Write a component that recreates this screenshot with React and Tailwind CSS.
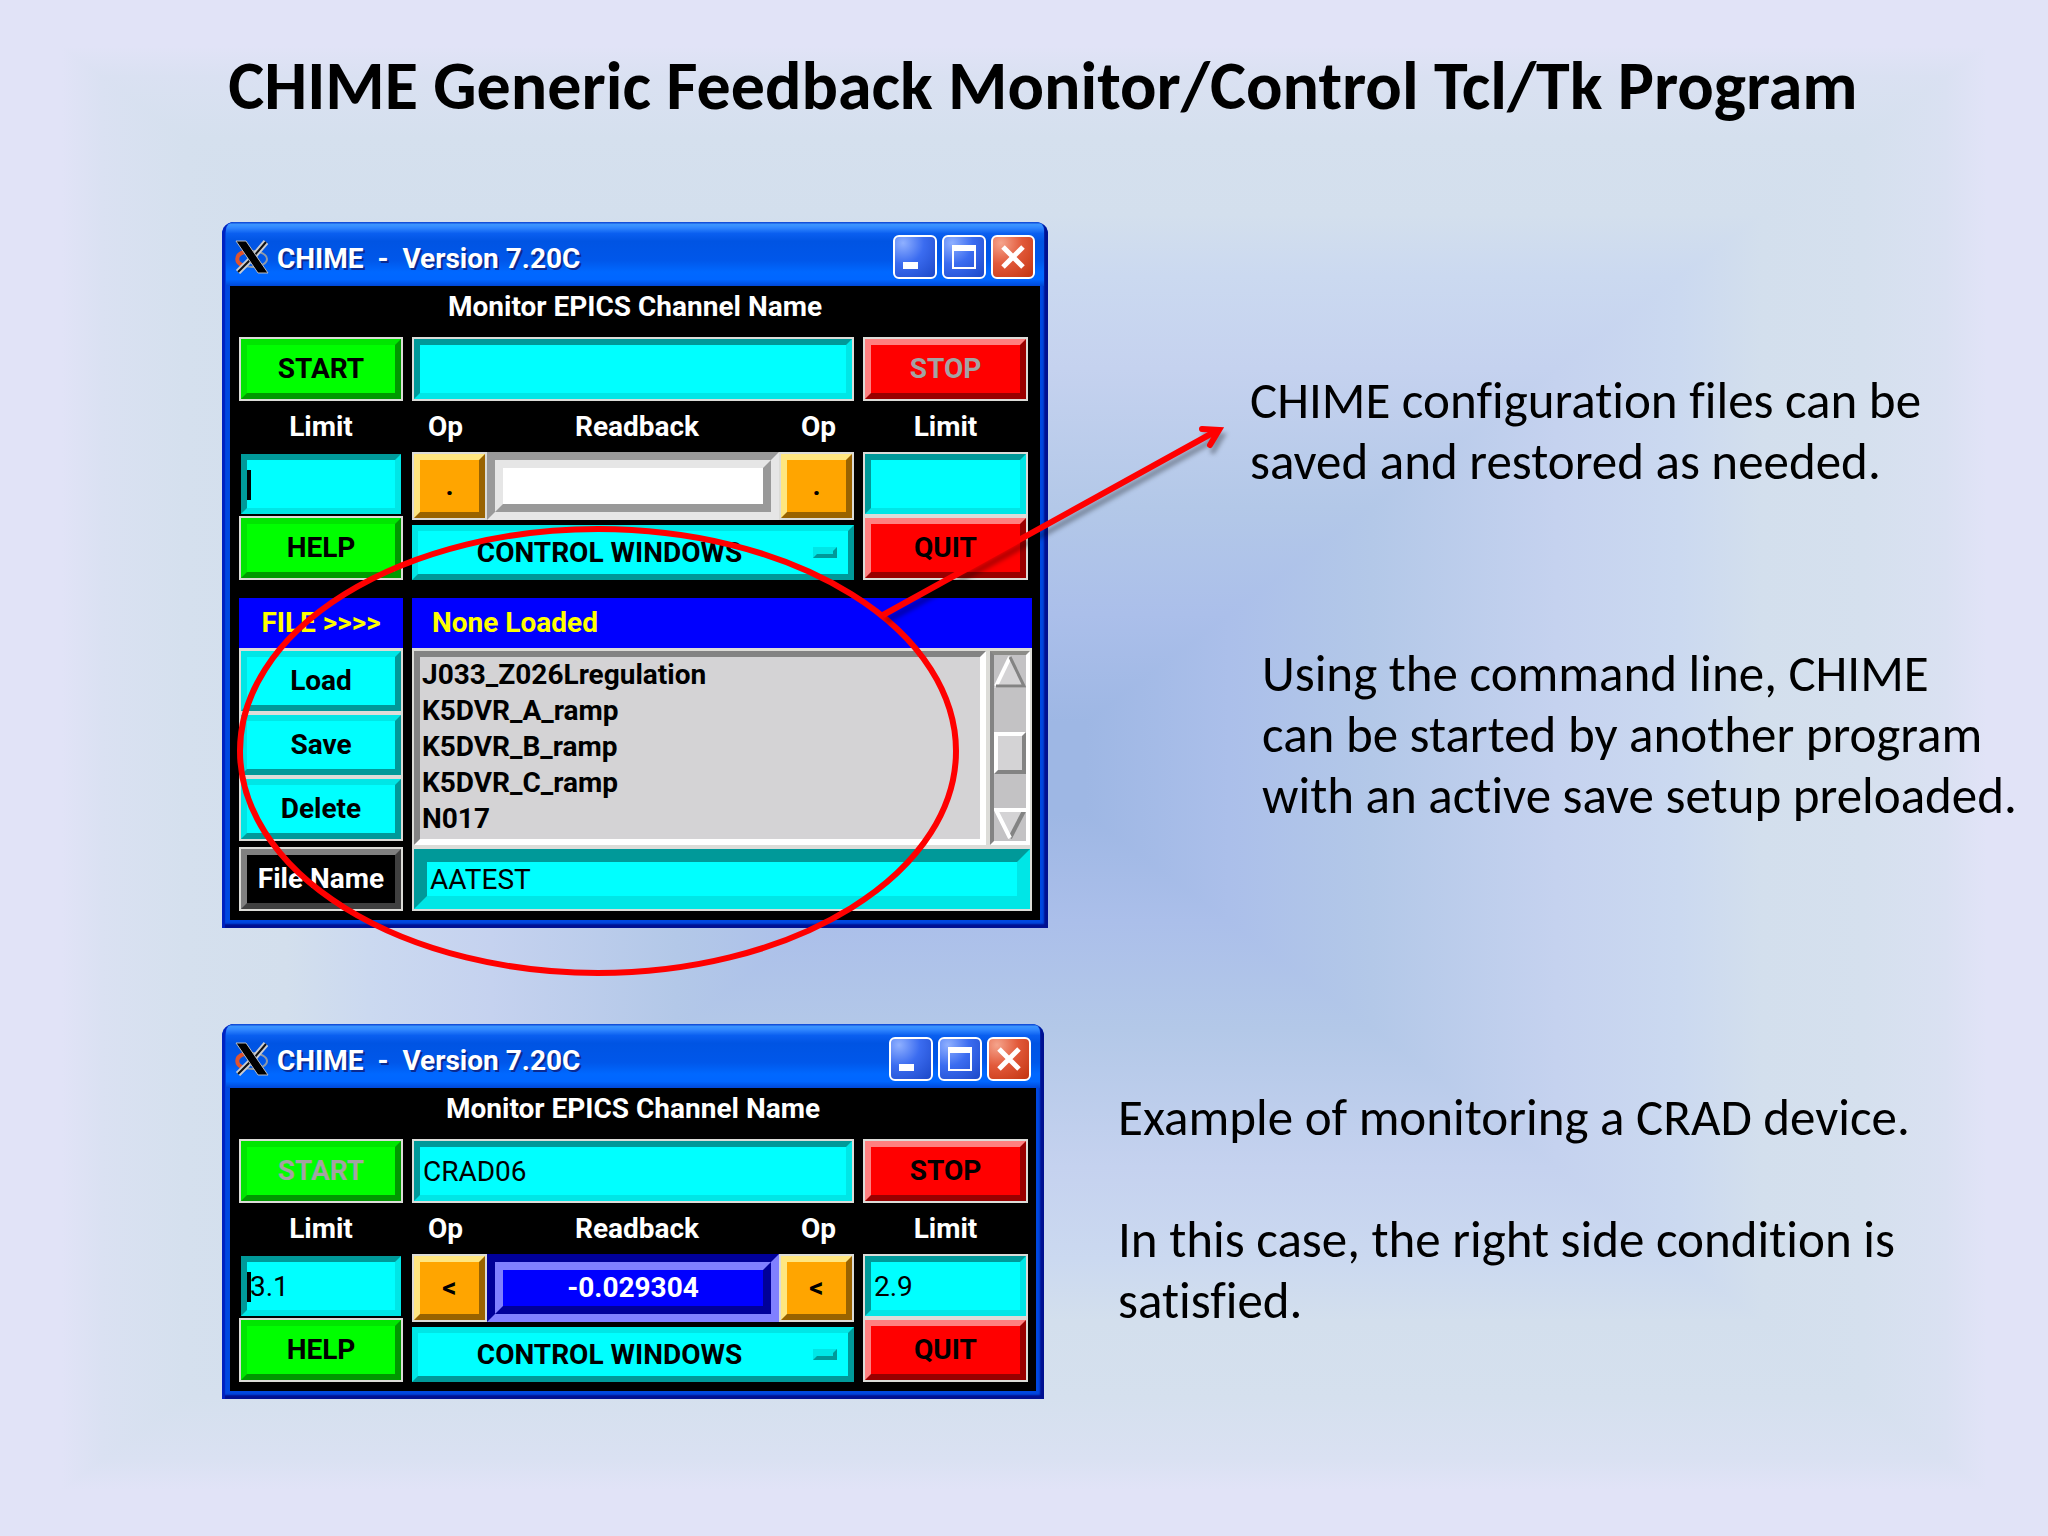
import clsx from "clsx"

// Tk relief colours: light edge on top/left for raised, dark edge for sunken
const tones = {
  green: "bg-[#00ff00] border-t-[#00e600] border-l-[#00e600] border-b-[#009900] border-r-[#009900] text-black",
  red: "bg-[#ff0000] border-t-[#ff8080] border-l-[#ff8080] border-b-[#990000] border-r-[#990000] text-black",
  cyan: "bg-[#00ffff] border-t-[#00e6e6] border-l-[#00e6e6] border-b-[#009999] border-r-[#009999] text-black",
  orange: "bg-[#ffa500] border-t-[#ffe680] border-l-[#ffe680] border-b-[#996300] border-r-[#996300] text-black",
  black: "bg-black border-t-[#808080] border-l-[#808080] border-b-[#404040] border-r-[#404040] text-white",
}

const sunkenCyan = "bg-[#00ffff] border-t-[#009999] border-l-[#009999] border-b-[#00e6e6] border-r-[#00e6e6] text-black"

const readbacks = {
  idle: {
    outer: "border-t-[#999999] border-l-[#999999] border-b-[#e6e6e6] border-r-[#e6e6e6]",
    inner: "bg-white border-t-[#e6e6e6] border-l-[#e6e6e6] border-b-[#999999] border-r-[#999999]",
  },
  active: {
    outer: "border-t-[#000099] border-l-[#000099] border-b-[#8080ff] border-r-[#8080ff]",
    inner: "bg-[#0000ff] border-t-[#8080ff] border-l-[#8080ff] border-b-[#000099] border-r-[#000099]",
  },
}

const files = ["J033_Z026Lregulation", "K5DVR_A_ramp", "K5DVR_B_ramp", "K5DVR_C_ramp", "N017"]

const Frame = ({ className, children }) => (
  <div className={clsx("flex border-2 border-[#dcdcd8]", className)}>{children}</div>
)

const TkButton = ({ tone, className, children, ...props }) => (
  <button
    type="button"
    className={clsx("w-full border-6 leading-none font-bold disabled:text-[#a3a3a3]", tones[tone], className)}
    {...props}
  >
    {children}
  </button>
)

const Entry = ({ className, ...props }) => (
  <input
    type="text"
    className={clsx("w-full min-w-0 px-[3px] font-normal outline-none", sunkenCyan, className || "border-6")}
    {...props}
  />
)

const XLogo = () => (
  <svg viewBox="0 0 34 34" className="h-[34px] w-[34px]" aria-hidden="true">
    <ellipse cx="17" cy="19" rx="15" ry="8" fill="none" stroke="#8f9aa8" strokeWidth="2" />
    <path d="M9 12C0 15 0 23 9 26" fill="none" stroke="#e0532f" strokeWidth="4" />
    <path d="M31 2L19 16M15 20L3 32" stroke="#c9ccd2" strokeWidth="6" />
    <path d="M31 2L19 16M15 20L3 32" stroke="#111" strokeWidth="2" />
    <path d="M1 1h10l22 32H23z" fill="#000" stroke="#b9bcc2" strokeWidth="1" />
  </svg>
)

const captionButton =
  "flex h-11 w-11 items-center justify-center rounded-md border-2 border-white"

const TitleBar = () => (
  <div className="flex h-16 items-center bg-[linear-gradient(#0a3fd0_0%,#3c96ff_4%,#2f86ff_9%,#0a5ff0_18%,#0054e3_30%,#0057ea_60%,#0068ff_78%,#0066ff_90%,#0048d8_100%)] px-[9px] pt-1.5">
    <XLogo />
    <h2 className="flex-1 pt-1 pl-2 font-bold whitespace-pre text-white [text-shadow:2px_2px_0_#0a2a90]">{"CHIME  -  Version 7.20C"}</h2>
    <div className="flex gap-[5px]">
      <button type="button" aria-label="Minimize" className={clsx(captionButton, "bg-[radial-gradient(circle_at_20%_15%,#8fb0ff,#3b6cf0_45%,#1c48c8)]")}>
        <svg viewBox="0 0 40 40" className="h-10 w-10"><path d="M8 25h15v7H8z" fill="#fff" /></svg>
      </button>
      <button type="button" aria-label="Maximize" className={clsx(captionButton, "bg-[radial-gradient(circle_at_20%_15%,#8fb0ff,#3b6cf0_45%,#1c48c8)]")}>
        <svg viewBox="0 0 40 40" className="h-10 w-10"><path d="M8 8h24v24H8zM10 14v16h20V14z" fill="#fff" fillRule="evenodd" /></svg>
      </button>
      <button type="button" aria-label="Close" className={clsx(captionButton, "bg-[radial-gradient(circle_at_20%_15%,#f5a48c,#e2593a_45%,#c23410)]")}>
        <svg viewBox="0 0 40 40" className="h-10 w-10"><path d="M10 10L30 30M30 10L10 30" stroke="#fff" strokeWidth="5" /></svg>
      </button>
    </div>
  </div>
)

const Label = ({ className, children, ...props }) => (
  <label className={clsx("flex h-[51px] items-center justify-center font-bold text-white", className)} {...props}>{children}</label>
)

const Monitor = ({ id, running, channel, low, high, op, readback, className }) => {
  const relief = running ? readbacks.active : readbacks.idle
  return (
    <>
      <label htmlFor={`${id}-channel`} className="block pt-px pb-2.5 text-center leading-10 font-bold text-white">
        Monitor EPICS Channel Name
      </label>
      <div className={clsx("grid grid-cols-[164px_1fr_165px] gap-x-[9px] pl-[9px]", className)}>
        <div className="flex flex-col">
          <Frame className="h-16"><TkButton tone="green" disabled={running}>START</TkButton></Frame>
          <Label htmlFor={`${id}-low`}>Limit</Label>
          <div className="relative flex h-16 border-2 border-black">
            <Entry id={`${id}-low`} defaultValue={low} />
            <span className="absolute top-4 left-1.5 h-[30px] w-1 bg-black" />
          </div>
          <Frame className="h-16"><TkButton tone="green">HELP</TkButton></Frame>
        </div>
        <div className="flex flex-col">
          <Frame className="h-16"><Entry id={`${id}-channel`} defaultValue={channel} /></Frame>
          <div className="flex h-[51px] items-center text-center font-bold text-white">
            <span className="w-[75px] pr-2">Op</span>
            <span className="flex-1 pl-2">Readback</span>
            <span className="w-[75px] pl-1">Op</span>
          </div>
          <div className="flex h-[68px]">
            <Frame className="w-[75px]"><TkButton tone="orange">{op}</TkButton></Frame>
            <div className={clsx("flex flex-1 border-8", relief.outer)}>
              <output className={clsx("flex flex-1 items-center justify-center border-8 font-bold text-white", relief.inner)}>{readback}</output>
            </div>
            <Frame className="w-[75px]"><TkButton tone="orange">{op}</TkButton></Frame>
          </div>
          <TkButton tone="cyan" aria-haspopup="menu" className="mt-[5px] flex h-[55px] items-center pr-[11px]">
            <span className="flex-1">CONTROL WINDOWS</span>
            <span className="ml-3 h-[11px] w-6 border-4 border-t-[#00e6e6] border-r-[#009999] border-b-[#009999] border-l-[#00e6e6] bg-[#00e6e6]" />
          </TkButton>
        </div>
        <div className="flex flex-col">
          <Frame className="h-16"><TkButton tone="red" disabled={!running}>STOP</TkButton></Frame>
          <Label htmlFor={`${id}-high`}>Limit</Label>
          <Frame className="h-16"><Entry id={`${id}-high`} defaultValue={high} /></Frame>
          <Frame className="h-16"><TkButton tone="red">QUIT</TkButton></Frame>
        </div>
      </div>
    </>
  )
}

const Scrollbar = () => (
  <div className="flex w-10 flex-col items-center border-4 border-t-[#8c8c88] border-r-white border-b-white border-l-[#838383] bg-[#c3c2c4]">
    <svg viewBox="0 0 32 33" className="h-[33px] w-8" aria-hidden="true">
      <path d="M16 0L32 33H0z" fill="#d4d3d5" />
      <path d="M16 2L2 31" stroke="#fff" strokeWidth="4" />
      <path d="M16 2L30 31H2" fill="none" stroke="#838383" strokeWidth="3" />
    </svg>
    <span className="mt-11 h-[42px] w-8 border-4 border-t-white border-r-[#838383] border-b-[#838383] border-l-white bg-[#d4d3d5]" />
    <svg viewBox="0 0 32 33" className="mt-auto h-[33px] w-8" aria-hidden="true">
      <path d="M0 2h32L16 32z" fill="#d4d3d5" />
      <path d="M30 3L16 30" stroke="#838383" strokeWidth="4" />
      <path d="M32 2H2L16 30" fill="none" stroke="#fff" strokeWidth="4" />
    </svg>
  </div>
)

const FileSection = () => (
  <div className="mt-[18px] grid grid-cols-[164px_1fr] gap-x-[9px] pr-2 pl-[9px]">
    <div className="flex h-[50px] items-center justify-center bg-[#0000ff] font-bold text-[#ffff00]">FILE &gt;&gt;&gt;&gt;</div>
    <div className="flex h-[50px] items-center bg-[#0000ff] pl-5 font-bold text-[#ffff00]">None Loaded</div>
    <div className="mb-1.5 flex flex-col gap-1 bg-[#dcdcd8] px-0.5 pt-[3px] pb-0.5">
      <TkButton tone="cyan" className="h-[60px]">Load</TkButton>
      <TkButton tone="cyan" className="h-[60px]">Save</TkButton>
      <TkButton tone="cyan" className="h-[60px]">Delete</TkButton>
    </div>
    <div className="flex justify-between bg-[#dcdcd8] px-0.5 pt-[3px] pb-0.5">
      <ul className="mr-1 flex-1 border-6 border-t-[#838383] border-r-white border-b-white border-l-[#838383] bg-[#d4d3d5] pl-0.5 leading-9 font-bold">
        {files.map((file) => <li key={file}>{file}</li>)}
      </ul>
      <Scrollbar />
    </div>
    <Frame className="h-16">
      <label htmlFor="file-name" className={clsx("flex flex-1 items-center justify-center border-6 font-bold", tones.black)}>File Name</label>
    </Frame>
    <Frame className="h-16"><Entry id="file-name" defaultValue="AATEST" className="border-13" /></Frame>
  </div>
)

const Window = ({ className, children }) => (
  <section className={clsx("rounded-t-xl bg-[#0048e0] p-2 pt-0 font-['Roboto',sans-serif] text-[28px] leading-none shadow-[inset_3px_0_1px_#0022c0,inset_-4px_-4px_2px_#001090]", className)}>
    <div className="-mx-1 overflow-hidden rounded-t-lg"><TitleBar /></div>
    <div className="bg-black pb-[9px]">{children}</div>
  </section>
)

const Annotation = () => (
  <svg className="pointer-events-none absolute top-0 left-0 h-full w-full overflow-visible" fill="none" stroke="#ff0000" aria-hidden="true">
    <ellipse cx="376" cy="529" rx="358" ry="222" strokeWidth="6" />
    <g strokeWidth="6" className="drop-shadow-[3px_6px_2px_rgba(0,0,0,0.3)]">
      <path d="M661 393L996 208" />
      <path d="M980 207L997 208L988 223" strokeLinecap="round" />
    </g>
  </svg>
)

// Rectangular gradient: vertical bands with the left and right wedges laid over them
const Background = () => (
  <div className="absolute inset-0 -z-10" aria-hidden="true">
    <div className="absolute inset-0 bg-[linear-gradient(#e1e3f7_3%,#dae1f2_5%,#d5e0ee_9%,#d3dfed_14%,#cbd9f0_18%,#c5d2ef_24%,#b3c8e8_33%,#abbfea_40%,#9eb7e4_47%,#9eb7e4_53%,#abbfea_60%,#b3c8e8_67%,#c5d2ef_76%,#cbd9f0_82%,#d3dfed_86%,#d5e0ee_91%,#dae1f2_95%,#e1e3f7_97%)]" />
    <div className="absolute inset-0 bg-[linear-gradient(90deg,#e1e3f7_3%,#dae1f2_5%,#d5e0ee_9%,#d3dfed_14%,#cbd9f0_18%,#c5d2ef_24%,#b3c8e8_33%,#abbfea_40%,#9eb7e4_47%,#9eb7e4_53%,#abbfea_60%,#b3c8e8_67%,#c5d2ef_76%,#cbd9f0_82%,#d3dfed_86%,#d5e0ee_91%,#dae1f2_95%,#e1e3f7_97%)] [clip-path:polygon(0_0,100%_100%,100%_0,0_100%)]" />
  </div>
)

export default function App() {
  return (
    <main className="relative isolate min-h-screen overflow-hidden pt-11 font-['Carlito','Lato',sans-serif] text-[51px] leading-[61px] text-black [font-variant-ligatures:none]">
      <Background />
      <h1 className="pl-[38px] text-center text-[68px] leading-[83px] font-bold">CHIME Generic Feedback Monitor/Control Tcl/Tk Program</h1>
      <div className="mt-[95px] grid grid-cols-[826fr_1000fr] gap-y-24 pl-[222px]">
        <div className="relative">
          <Window>
            <Monitor id="idle" op="." className="pr-3" />
            <FileSection />
          </Window>
          <Annotation />
        </div>
        <div className="pt-[148px]">
          <p className="pl-[202px]">CHIME configuration files can be<br />saved and restored as needed.</p>
          <p className="mt-[151px] pl-[214px]">Using the command line, CHIME<br />can be started by another program<br />with an active save setup preloaded.</p>
        </div>
        <div>
          <Window className="mr-1">
            <Monitor id="crad" running channel="CRAD06" low="3.1" high="2.9" op="<" readback="-0.029304" className="pr-2" />
          </Window>
        </div>
        <div className="pt-[63px] pl-[70px]">
          <p>Example of monitoring a CRAD device.</p>
          <p className="mt-[61px]">In this case, the right side condition is<br />satisfied.</p>
        </div>
      </div>
    </main>
  )
}
